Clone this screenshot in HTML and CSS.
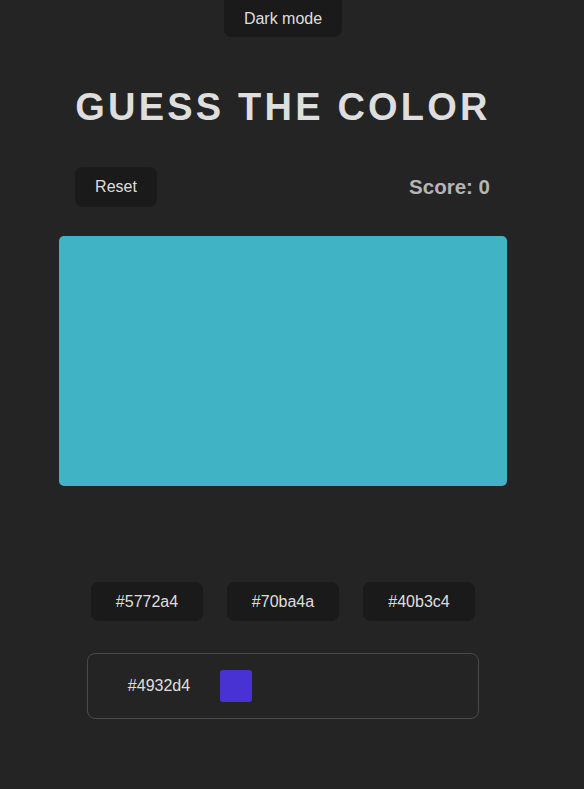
FILE: index.html
```html
<!DOCTYPE html>
<html lang="en">
<head>
<meta charset="utf-8">
<title>Guess the color</title>
<link rel="stylesheet" href="styles.css">
</head>
<body>
<div class="page">
  <button class="btn mode-btn">Dark mode</button>
  <h1 class="title">GUESS THE COLOR</h1>
  <div class="game">
    <div class="toolbar">
      <button class="btn reset-btn">Reset</button>
      <div class="score">Score: 0</div>
    </div>
    <div class="swatch-box"></div>
  </div>
  <div class="options">
    <button class="btn option">#5772a4</button>
    <button class="btn option">#70ba4a</button>
    <button class="btn option">#40b3c4</button>
  </div>
  <div class="history">
    <span class="history-hex">#4932d4</span>
    <span class="history-swatch"></span>
  </div>
</div>
</body>
</html>
```
FILE: styles.css
```css
html, body {
  margin: 0;
  padding: 0;
  background: #242424;
}
body {
  font-family: "Liberation Sans", Arial, sans-serif;
  color: rgba(255, 255, 255, 0.87);
  font-size: 16px;
}
.page {
  width: 566px;
  height: 789px;
  display: flex;
  flex-direction: column;
  align-items: center;
}
.btn {
  font-family: "Liberation Sans", Arial, sans-serif;
  font-size: 16px;
  color: rgba(255, 255, 255, 0.87);
  background: #1a1a1a;
  border: 1px solid transparent;
  border-radius: 8px;
  cursor: pointer;
}
.mode-btn {
  width: 118px;
  height: 37px;
  border-radius: 0 0 8px 8px;
  padding: 0;
}
.title {
  margin: 48px 0 0;
  font-size: 38px;
  line-height: 44px;
  font-weight: 700;
  letter-spacing: 3.2px;
  color: #dedede;
  padding-left: 0;
}
.game {
  width: 448px;
  margin-top: 38px;
}
.toolbar {
  display: flex;
  justify-content: space-between;
  align-items: center;
  padding: 0 17px 0 16px;
  height: 40px;
}
.reset-btn {
  width: 82px;
  height: 40px;
  padding: 0;
}
.score {
  font-size: 20.5px;
  font-weight: 700;
  color: #b5b5b5;
}
.swatch-box {
  margin-top: 29px;
  height: 250px;
  background: #40b3c4;
  border-radius: 5px;
}
.options {
  margin-top: 96px;
  display: flex;
  gap: 24px;
}
.option {
  width: 112px;
  height: 39px;
  padding: 0;
}
.history {
  margin-top: 32px;
  width: 390px;
  height: 64px;
  border: 1px solid #4a4a4a;
  border-radius: 8px;
  display: flex;
  align-items: center;
  padding-left: 0;
}
.history-hex {
  width: 112px;
  margin-left: 15px;
  text-align: center;
}
.history-swatch {
  width: 32px;
  height: 32px;
  margin-left: 5px;
  background: #4932d4;
  border-radius: 3px;
}
```
